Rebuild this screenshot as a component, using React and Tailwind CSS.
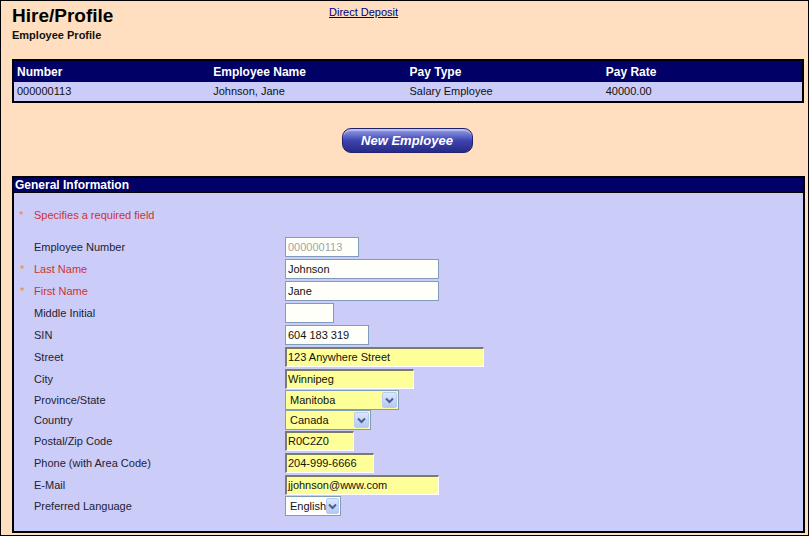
import React from "react";

const font = { fontFamily: '"Liberation Sans", Arial, sans-serif' };

const rows = [
  { label: "Employee Number", value: "000000113", w: 74, kind: "disabled", h: 22 },
  { label: "Last Name", value: "Johnson", w: 154, kind: "plain", req: true, h: 22 },
  { label: "First Name", value: "Jane", w: 154, kind: "plain", req: true, h: 22 },
  { label: "Middle Initial", value: "", w: 49, kind: "plain", h: 22 },
  { label: "SIN", value: "604 183 319", w: 84, kind: "plain", h: 22 },
  { label: "Street", value: "123 Anywhere Street", w: 199, kind: "yellow", h: 22 },
  { label: "City", value: "Winnipeg", w: 129, kind: "yellow", h: 21 },
  { label: "Province/State", value: "Manitoba", w: 114, kind: "select", h: 20 },
  { label: "Country", value: "Canada", w: 86, kind: "select", h: 21 },
  { label: "Postal/Zip Code", value: "R0C2Z0", w: 69, kind: "yellow", h: 22 },
  { label: "Phone (with Area Code)", value: "204-999-6666", w: 89, kind: "yellow", h: 22 },
  { label: "E-Mail", value: "jjohnson@www.com", w: 154, kind: "yellow", h: 21 },
  { label: "Preferred Language", value: "English", w: 56, kind: "selectWhite", h: 21 },
];

const Chevron = () => (
  <div className="w-[15px] h-full flex items-center justify-center bg-linear-to-b from-[#dce6fd] to-[#b4c8f5] border border-[#b9cbf3] rounded-[2px]">
    <svg width="9" height="7" viewBox="0 0 9 7">
      <path d="M1 1.5 L4.5 5 L8 1.5" stroke="#4d5f8a" strokeWidth="2" fill="none" />
    </svg>
  </div>
);

const Field = ({ row }) => {
  if (row.kind === "select" || row.kind === "selectWhite") {
    const bg = row.kind === "select" ? "bg-[#ffff99]" : "bg-white";
    return (
      <div
        className={`flex h-[20px] border border-[#7f9db9] ${bg} p-[1px]`}
        style={{ width: row.w }}
      >
        <div className="flex-1 flex items-center pl-[3px] text-[11px] text-[#111]">{row.value}</div>
        <Chevron />
      </div>
    );
  }
  if (row.kind === "yellow") {
    return (
      <div
        className="h-[20px] flex items-center bg-[#ffff99] border-t-2 border-l-2 border-t-[#7b7b6b] border-l-[#7b7b6b] border-b border-r border-b-white border-r-white pl-[1px] text-[11px] text-[#111]"
        style={{ width: row.w }}
      >
        {row.value}
      </div>
    );
  }
  return (
    <div
      className={`h-[20px] flex items-center bg-[#fffffa] border border-[#7f9db9] pl-[2px] text-[11px] ${
        row.kind === "disabled" ? "text-[#a4a4a4]" : "text-[#111]"
      }`}
      style={{ width: row.w }}
    >
      {row.value}
    </div>
  );
};

export default function App() {
  return (
    <div
      className="w-[809px] h-[536px] bg-[#ffdfbf] border border-black overflow-hidden flex flex-col"
      style={font}
    >
      {/* header */}
      <div className="flex h-[58px] pl-[11px] pt-[4px]">
        <div className="w-[317px]">
          <div className="text-[19px] font-bold text-black leading-[22px]">Hire/Profile</div>
          <div className="text-[11px] font-bold text-[#111] leading-[14px] mt-[1px]">Employee Profile</div>
        </div>
        <a className="text-[11px] text-[#000080] underline leading-[14px]">Direct Deposit</a>
      </div>

      {/* summary table */}
      <div className="mx-[11px] border-2 border-black w-[792px]">
        <div className="grid grid-cols-4 bg-[#000066] h-[21px] items-center pl-[3px] text-[12px] font-bold text-white">
          <div>Number</div>
          <div>Employee Name</div>
          <div>Pay Type</div>
          <div>Pay Rate</div>
        </div>
        <div className="grid grid-cols-4 bg-[#ccccf9] h-[19px] items-center pl-[3px] text-[11px] text-[#111]">
          <div>000000113</div>
          <div>Johnson, Jane</div>
          <div>Salary Employee</div>
          <div>40000.00</div>
        </div>
      </div>

      {/* button */}
      <div className="flex justify-center pt-[25px] pb-[23px] pl-[5px]">
        <button className="w-[131px] h-[25px] rounded-[9px] border border-[#20226e] bg-linear-to-b from-[#9aa0ec] via-[#3f44b0] to-[#262a86] text-white text-[13px] font-bold italic shadow-[inset_0_2px_0_rgba(255,255,255,0.35)]">
          New Employee
        </button>
      </div>

      {/* general information */}
      <div className="mx-[11px] w-[793px] border-2 border-black bg-[#ccccf8] flex-1 mb-[2px]">
        <div className="bg-[#000066] h-[15px] border-b border-black text-white text-[12px] font-bold leading-[14px] pl-[1px]">
          General Information
        </div>
        <div className="pt-[14px] text-[11px]">
          <div className="flex h-[16px] items-center">
            <span className="w-[20px] pl-[5px] text-[#e08a5c]">*</span>
            <span className="text-[#cc3333]">Specifies a required field</span>
          </div>
          <div className="mt-[14px] flex flex-col">
            {rows.map((row) => (
              <div key={row.label} className="flex items-start" style={{ height: row.h }}>
                <div className="w-[271px] h-[20px] flex items-center">
                  <span className="w-[20px] pl-[6px] text-[#e08a5c]">{row.req ? "*" : ""}</span>
                  <span className={row.req ? "text-[#cc3333]" : "text-[#222233]"}>{row.label}</span>
                </div>
                <Field row={row} />
              </div>
            ))}
          </div>
        </div>
      </div>
    </div>
  );
}
